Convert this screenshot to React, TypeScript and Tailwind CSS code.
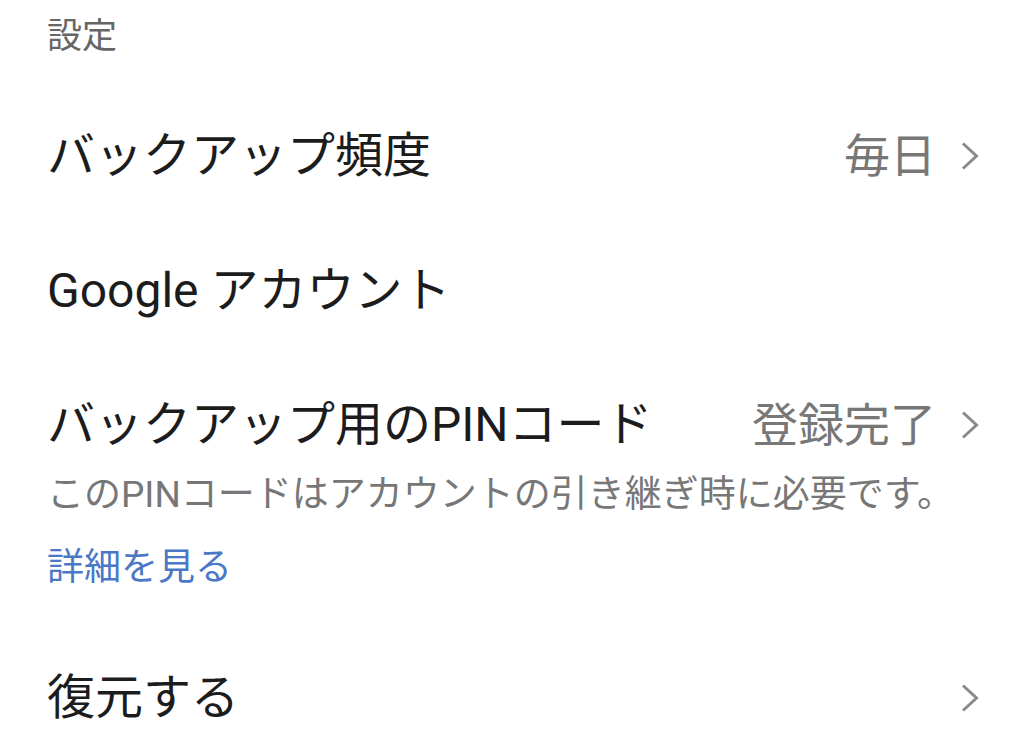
const Chevron = () => (
  <svg width="20" height="30" viewBox="0 0 20 30" fill="none" className="shrink-0">
    <path d="M3 2.5 L16.5 15 L3 27.5" stroke="#8a8a8a" strokeWidth="3" />
  </svg>
);

function Row({ title, value, chevron }: { title: string; value?: string; chevron?: boolean }) {
  return (
    <div className="h-[135px] flex items-center pl-[47px] pr-[44px]">
      <span className="flex-1 text-[48px] leading-[52px] text-[#1c1c1c]">{title}</span>
      {value && <span className="text-[46px] leading-[52px] text-[#777777] mr-[24px]">{value}</span>}
      {chevron && <Chevron />}
    </div>
  );
}

export default function App() {
  return (
    <div className="w-[1024px] h-[752px] overflow-hidden bg-white font-['Roboto','Noto_Sans_CJK_JP',sans-serif]">
      {/* Section header */}
      <div className="h-[88px] pt-[16px] pl-[47px]">
        <span className="block text-[35px] leading-[42px] text-[#666666]">設定</span>
      </div>

      <Row title="バックアップ頻度" value="毎日" chevron />
      <Row title="Google アカウント" />

      {/* PIN row with description */}
      <div className="pt-[42px] pb-[40px] pl-[47px] pr-[44px]">
        <div className="h-[50px] flex items-center">
          <span className="flex-1 text-[48px] leading-[50px] text-[#1c1c1c]">バックアップ用のPINコード</span>
          <span className="text-[46px] leading-[50px] text-[#777777] mr-[24px]">登録完了</span>
          <Chevron />
        </div>
        <p className="mt-[23px] text-[37px] leading-[44px] text-[#777777]">
          このPINコードはアカウントの引き継ぎ時に必要です。
        </p>
        <p className="mt-[29px] text-[37px] leading-[44px] text-[#4a77c6]">詳細を見る</p>
      </div>

      <Row title="復元する" chevron />
    </div>
  );
}
